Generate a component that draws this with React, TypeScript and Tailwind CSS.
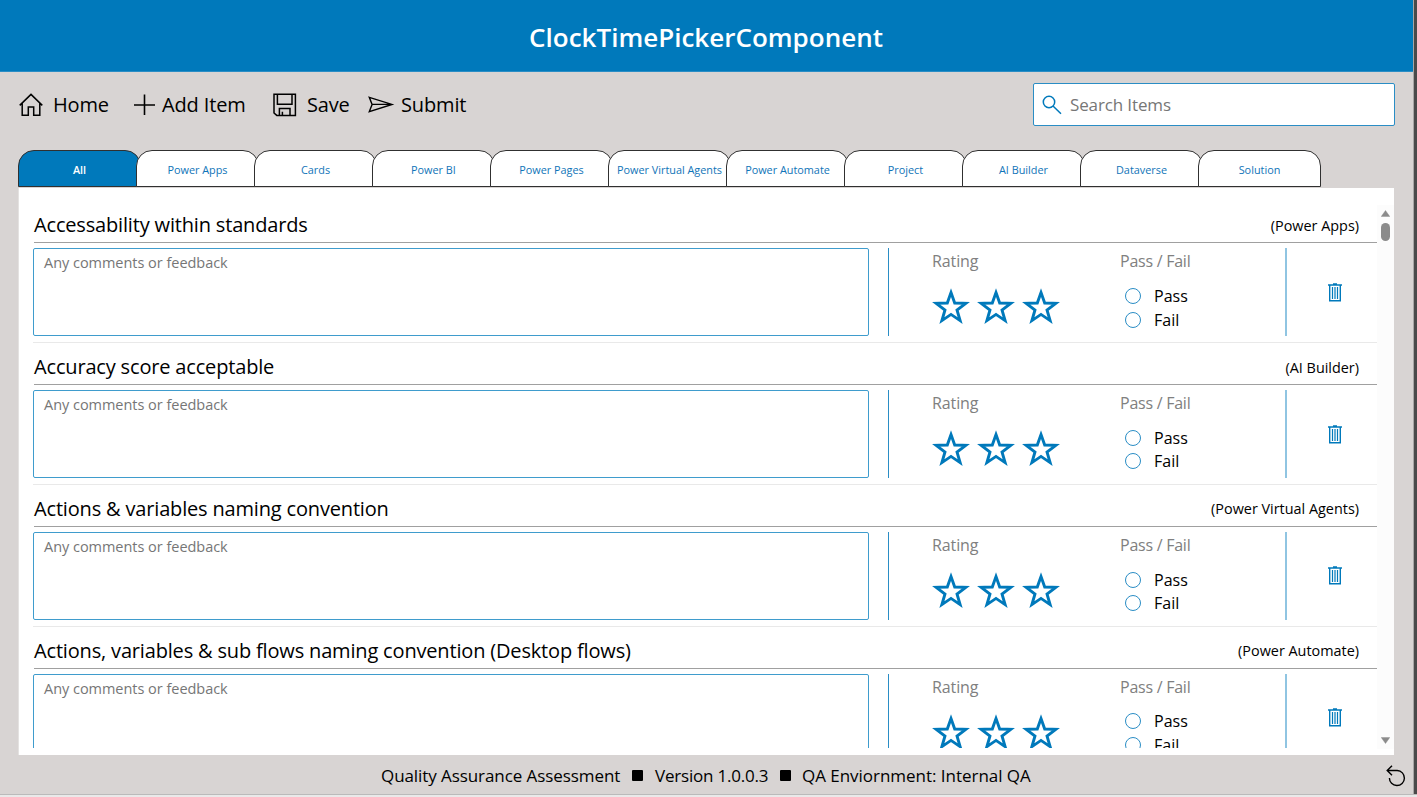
import React from "react";

const tabs = [
  "All",
  "Power Apps",
  "Cards",
  "Power BI",
  "Power Pages",
  "Power Virtual Agents",
  "Power Automate",
  "Project",
  "AI Builder",
  "Dataverse",
  "Solution",
];

const rows = [
  { title: "Accessability within standards", category: "(Power Apps)" },
  { title: "Accuracy score acceptable", category: "(AI Builder)" },
  { title: "Actions & variables naming convention", category: "(Power Virtual Agents)" },
  { title: "Actions, variables & sub flows naming convention (Desktop flows)", category: "(Power Automate)" },
];

function HomeIcon() {
  return (
    <svg width="24" height="24" viewBox="0 0 24 24" fill="none" stroke="#000" strokeWidth="1.5" className="block">
      <path d="M0.7 12.4 L12 1.4 L23.3 12.4 M3.2 10.5 V22.2 H9.3 V14 H14.7 V22.2 H20.8 V10.5" />
    </svg>
  );
}

function PlusIcon() {
  return (
    <svg width="22" height="22" viewBox="0 0 22 22" fill="none" stroke="#000" strokeWidth="1.6" className="block">
      <path d="M10.5 0.5 V21 M0 11 H21" />
    </svg>
  );
}

function SaveIcon() {
  return (
    <svg width="24" height="24" viewBox="0 0 24 24" fill="none" stroke="#000" strokeWidth="1.5" className="block">
      <path d="M1 1.2 H22.4 V22.4 H3.8 L1 20 Z M4.4 1.2 V11.2 H19 V1.2 M6.4 22.4 V15.6 H17 V22.4 M9.4 22.4 V18.8" />
    </svg>
  );
}

function SubmitIcon() {
  return (
    <svg width="27" height="18" viewBox="0 0 27 18" fill="none" stroke="#000" strokeWidth="1.4" className="block">
      <path d="M1.3 1.3 L24 8.4 L1.3 15.6 L4.1 8.4 Z M4.1 8.4 H23" />
    </svg>
  );
}

function SearchIcon() {
  return (
    <svg width="20" height="20" viewBox="0 0 20 20" fill="none" stroke="#0079bb" strokeWidth="1.5" className="block">
      <circle cx="7" cy="7" r="5.7" />
      <path d="M11 11 L19 18.8" />
    </svg>
  );
}

function TrashIcon() {
  return (
    <svg width="14" height="19" viewBox="0 0 14 19" fill="none" stroke="#0079bb" className="block">
      <path d="M0 2 H14 M5 0.8 H9" strokeWidth="1.3" />
      <path d="M1.7 2 V17.8 H12.3 V2" strokeWidth="1.4" />
      <path d="M4.5 4 V16 M7 4 V16 M9.5 4 V16" strokeWidth="1.2" />
    </svg>
  );
}

function ResetIcon() {
  return (
    <svg width="20" height="22" viewBox="0 0 20 22" fill="none" stroke="#000" strokeWidth="1.4" className="block">
      <path d="M6 0.8 L1.2 5.5 L6 10.2 M1.2 5.5 H11.2 A7.5 7.5 0 1 1 3.4 13" />
    </svg>
  );
}

function Star() {
  return (
    <svg width="38" height="37" viewBox="-19 -20 38 37" className="block">
      <path
        d="M0 -15.4 L3.7 -5 L14.8 -4.7 L6 2 L9.1 12.6 L0 6.4 L-9.1 12.6 L-6 2 L-14.8 -4.7 L-3.7 -5 Z"
        fill="none"
        stroke="#0079bb"
        strokeWidth="2.9"
        strokeMiterlimit="6"
      />
    </svg>
  );
}

function Radio({ label }: { label: string }) {
  return (
    <div className="flex h-[23.6px] items-center">
      <span className="size-4 rounded-full border border-[#2a8dc5]" />
      <span className="ml-[13px] text-[16px] leading-[22px] text-black">{label}</span>
    </div>
  );
}

function Row({ title, category }: { title: string; category: string }) {
  return (
    <div className="flex h-[141.75px] flex-col border-b border-[#e9e9e9]">
      <div className="ml-px flex h-[42px] shrink-0 items-center justify-between border-b border-[#a0a0a0] pr-[18px] pt-[7px]">
        <span className="text-[20px] tracking-[-0.17px]">{title}</span>
        <span className="pt-px text-[14.4px]">{category}</span>
      </div>
      <div className="mt-[5px] flex h-[88px] shrink-0">
        <div className="w-[836px] shrink-0 rounded-[2px] border border-[#3f9ccd] px-[10px] pt-1 text-[14.5px] leading-[20px] tracking-[-0.03px] text-[#767676]">
          Any comments or feedback
        </div>
        <div className="ml-[19px] w-px bg-[#2a8dc5]" />
        <div className="ml-[43px] w-[187px] text-[16px] leading-[22px] text-[#808080]">
          <div className="pt-[2px] tracking-[-0.1px]">Rating</div>
          <div className="mt-[16px] flex gap-[7px]">
            <Star />
            <Star />
            <Star />
          </div>
        </div>
        <div className="w-[165px] text-[16px] leading-[22px] text-[#808080]">
          <div className="pl-px pt-[2px] tracking-[-0.25px]">Pass / Fail</div>
          <div className="mt-[12px] pl-[6px]">
            <Radio label="Pass" />
            <Radio label="Fail" />
          </div>
        </div>
        <div className="ml-[1px] w-[2px] bg-[#90c5e2]" />
        <div className="flex flex-1 items-center justify-center pl-[6px]">
          <TrashIcon />
        </div>
      </div>
    </div>
  );
}

export default function App() {
  return (
    <div className="flex h-[797px] w-[1417px] flex-col overflow-hidden bg-[#e9e9e9] font-['Open_Sans','Noto_Sans',sans-serif] text-black">
      <div className="flex h-[794px] shrink-0">
        <div className="flex w-[1413px] flex-col bg-[#d8d4d3]">
          <header className="flex h-[72px] shrink-0 items-center justify-center border-b border-[#2a8dc5] bg-[#0079bb] pr-px pt-[3px] text-[26px] font-semibold text-white">
            ClockTimePickerComponent
          </header>

          <div className="flex h-[78px] shrink-0 items-start pl-[19px] pr-[18px] pt-[11px]">
            <nav className="flex h-[43px] items-center text-[20px] tracking-[-0.15px]">
              <div className="flex w-[115px] items-center gap-[10px]">
                <HomeIcon />
                <span>Home</span>
              </div>
              <div className="flex w-[139px] items-center gap-[6px]">
                <PlusIcon />
                <span>Add Item</span>
              </div>
              <div className="flex w-[95px] items-center gap-[10px]">
                <SaveIcon />
                <span>Save</span>
              </div>
              <div className="flex items-center gap-[6px]">
                <SubmitIcon />
                <span>Submit</span>
              </div>
            </nav>
            <div className="ml-auto flex h-[43px] w-[362px] items-center rounded-[2px] border border-[#2a8dc5] bg-white pl-[8px] text-[17px] text-[#767676]">
              <SearchIcon />
              <span className="ml-[8px] pt-px tracking-[-0.13px]">Search Items</span>
            </div>
          </div>

          <div className="flex h-[38px] shrink-0 pl-[18px]">
            {tabs.map((tab, i) => (
              <div
                key={tab}
                className={
                  "-mr-[5px] flex h-[37px] w-[123px] shrink-0 items-center justify-center rounded-t-[16px] border border-[#303030] pt-[3px] text-[10.85px] " +
                  (i === 0 ? "bg-[#0079bb] font-semibold text-white" : "bg-white text-[#0f74b8]")
                }
              >
                {tab}
              </div>
            ))}
          </div>

          <main className="ml-[18px] flex h-[567px] w-[1376px] shrink-0 border-l border-[#e4e2e1] bg-white pt-[13px]">
            <div className="ml-[14px] h-[547px] w-[1344px] overflow-hidden pt-[0.3px]">
              {rows.map((row) => (
                <Row key={row.title} title={row.title} category={row.category} />
              ))}
            </div>
            <div className="mt-[4px] flex h-[544px] w-[17px] flex-col items-center bg-[#fcfcfc]">
              <svg width="9" height="7" viewBox="0 0 9 7" className="mt-[5px] block shrink-0">
                <path d="M4.5 0.5 L8.8 6.5 H0.2 Z" fill="#8b8b8b" stroke="#8b8b8b" strokeWidth="0.4" />
              </svg>
              <div className="mt-[6px] h-[18px] w-[9px] shrink-0 rounded-full bg-[#8b8b8b]" />
              <svg width="9" height="7" viewBox="0 0 9 7" className="mb-[5px] mt-auto block shrink-0">
                <path d="M4.5 6.5 L8.8 0.5 H0.2 Z" fill="#8b8b8b" stroke="#8b8b8b" strokeWidth="0.4" />
              </svg>
            </div>
          </main>

          <footer className="flex flex-1 items-center pl-[381px] pr-[7px] pt-[2px] text-[17px]">
            <span className="w-[251px] tracking-[-0.08px]">Quality Assurance Assessment</span>
            <span className="size-[11px] rounded-[1px] bg-black" />
            <span className="ml-[12px] w-[125px] tracking-[-0.2px]">Version 1.0.0.3</span>
            <span className="size-[11px] rounded-[1px] bg-black" />
            <span className="ml-[11px] tracking-[-0.03px]">QA Enviornment: Internal QA</span>
            <span className="ml-auto">
              <ResetIcon />
            </span>
          </footer>
        </div>
        <div className="w-px bg-[#a8a6a5]" />
        <div className="flex-1 bg-[#4a4a4a]" />
      </div>
      <div className="h-px bg-[#bababa]" />
    </div>
  );
}
